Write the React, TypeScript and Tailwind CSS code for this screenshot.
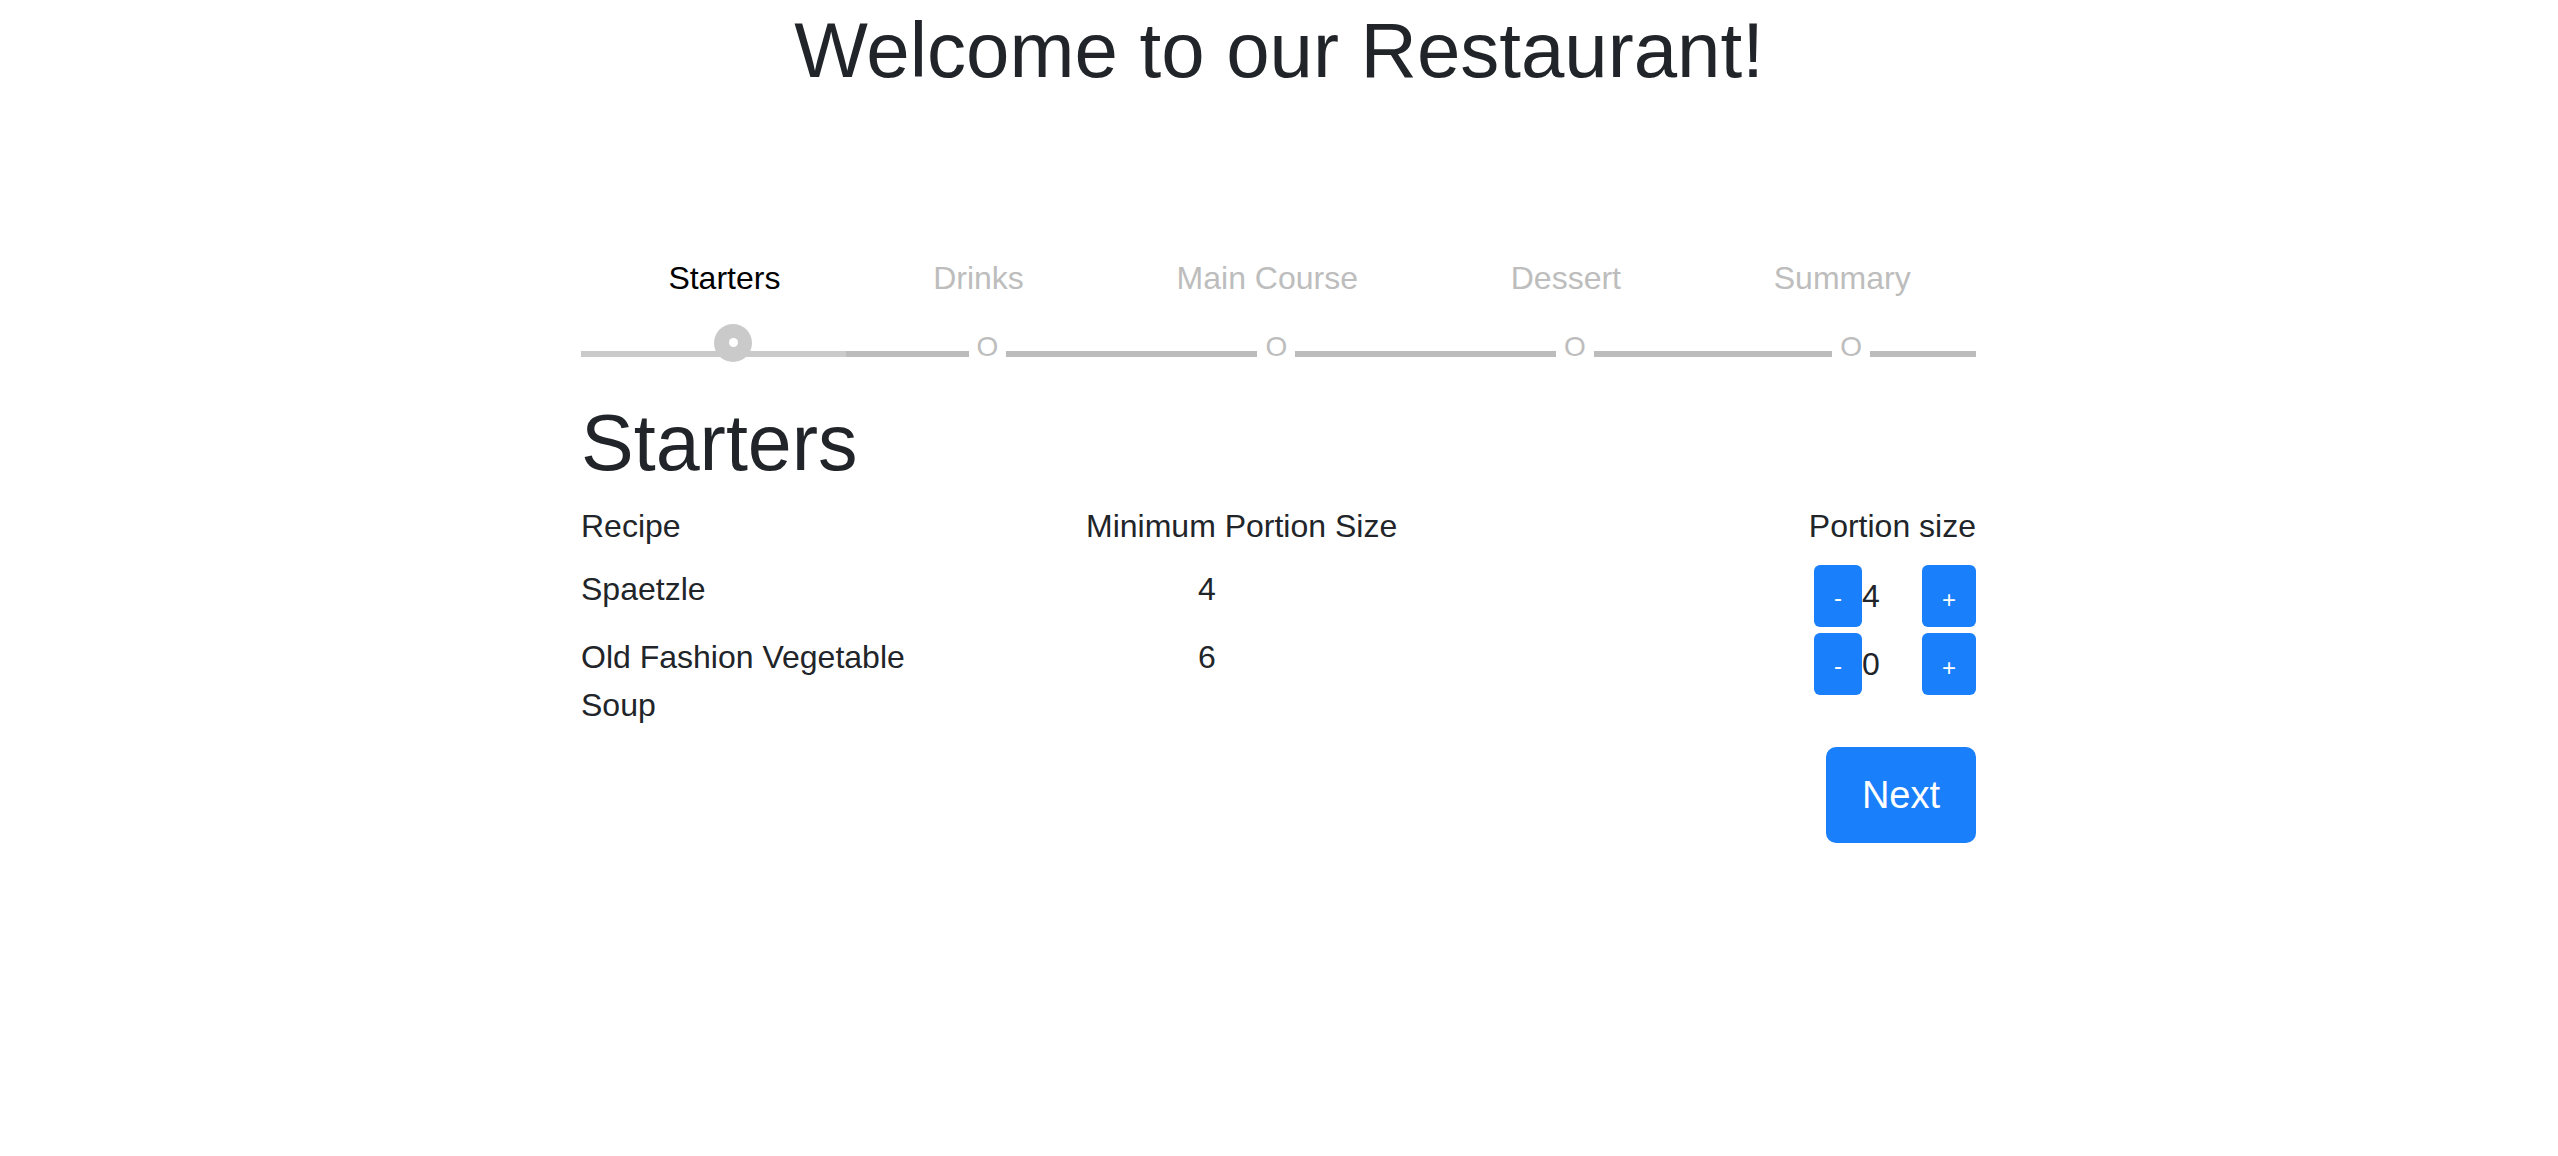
import React from "react"

const steps = ["Starters", "Drinks", "Main Course", "Dessert", "Summary"]

const dishes = [
  { name: "Spaetzle", min: 4, portion: 4 },
  { name: "Old Fashion Vegetable Soup", min: 6, portion: 0 },
]

function Step({ label, index }: { label: string; index: number }) {
  const active = index === 0
  return (
    <div className="flex flex-auto flex-col">
      <div className={`pl-[22px] text-center leading-[48px] ${active ? "text-black" : "text-[#bdbdbd]"}`}>
        {label}
      </div>
      <div className="mt-[31px] flex h-[28px] items-end">
        {active ? (
          <>
            <div className="mb-[4px] h-[6px] w-[40px] bg-[#cacaca]" />
            <div className="relative mb-[4px] h-[6px] flex-1 bg-[#cacaca]">
              <div className="absolute left-1/2 top-[-27px] flex size-[38px] -translate-x-1/2 items-center justify-center rounded-full bg-[#cacaca]">
                <div className="size-[9px] rounded-full bg-white" />
              </div>
            </div>
          </>
        ) : (
          <>
            <div className="mb-[4px] h-[6px] w-[40px] bg-[#bcbcbc]" />
            <div className="mb-[4px] h-[6px] flex-1 bg-[#bcbcbc]" />
            <span className="mx-[8px] text-[28px] leading-[28px] text-[#bdbdbd]">O</span>
            <div className="mb-[4px] h-[6px] flex-1 bg-[#bcbcbc]" />
          </>
        )}
      </div>
    </div>
  )
}

export default function App() {
  return (
    <div className="min-h-screen bg-white font-['Liberation_Sans',Arial,sans-serif] text-[32px] text-[#212529]">
      <h1 className="pt-[4px] text-center text-[78px] font-normal leading-[1.2]">Welcome to our Restaurant!</h1>

      <div className="pr-[1px]">
        <div className="mx-auto w-[1395px]">
          <div className="mt-[156px] flex">
            {steps.map((s, i) => (
              <Step key={s} label={s} index={i} />
            ))}
          </div>

          <h2 className="mt-[35px] mb-[12px] text-[79px] font-normal leading-[1.2]">Starters</h2>

          <div className="grid grid-cols-[405px_525px_1fr] leading-[48px]">
            <div>Recipe</div>
            <div className="pl-[100px]">Minimum Portion Size</div>
            <div className="text-right">Portion size</div>
          </div>

          <div className="mt-[15px] flex flex-col gap-[6px]">
            {dishes.map((d) => (
              <div key={d.name} className="grid grid-cols-[405px_525px_1fr] leading-[48px]">
                <div className="pr-[60px]">{d.name}</div>
                <div className="pl-[212px]">{d.min}</div>
                <div className="flex items-start justify-end">
                  <button className="h-[62px] w-[48px] rounded-[6px] bg-[#1a7ffb] pt-[4px] text-[24px] leading-none text-white">
                    -
                  </button>
                  <span className="mt-[7px] w-[60px] text-left">{d.portion}</span>
                  <button className="h-[62px] w-[54px] rounded-[6px] bg-[#1a7ffb] pt-[8px] text-[24px] leading-none text-white">
                    +
                  </button>
                </div>
              </div>
            ))}
          </div>

          <div className="mt-[18px] flex justify-end">
            <button className="h-[96px] w-[150px] rounded-[10px] bg-[#1a7ffb] text-[38px] leading-none text-white">
              Next
            </button>
          </div>
        </div>
      </div>
    </div>
  )
}
